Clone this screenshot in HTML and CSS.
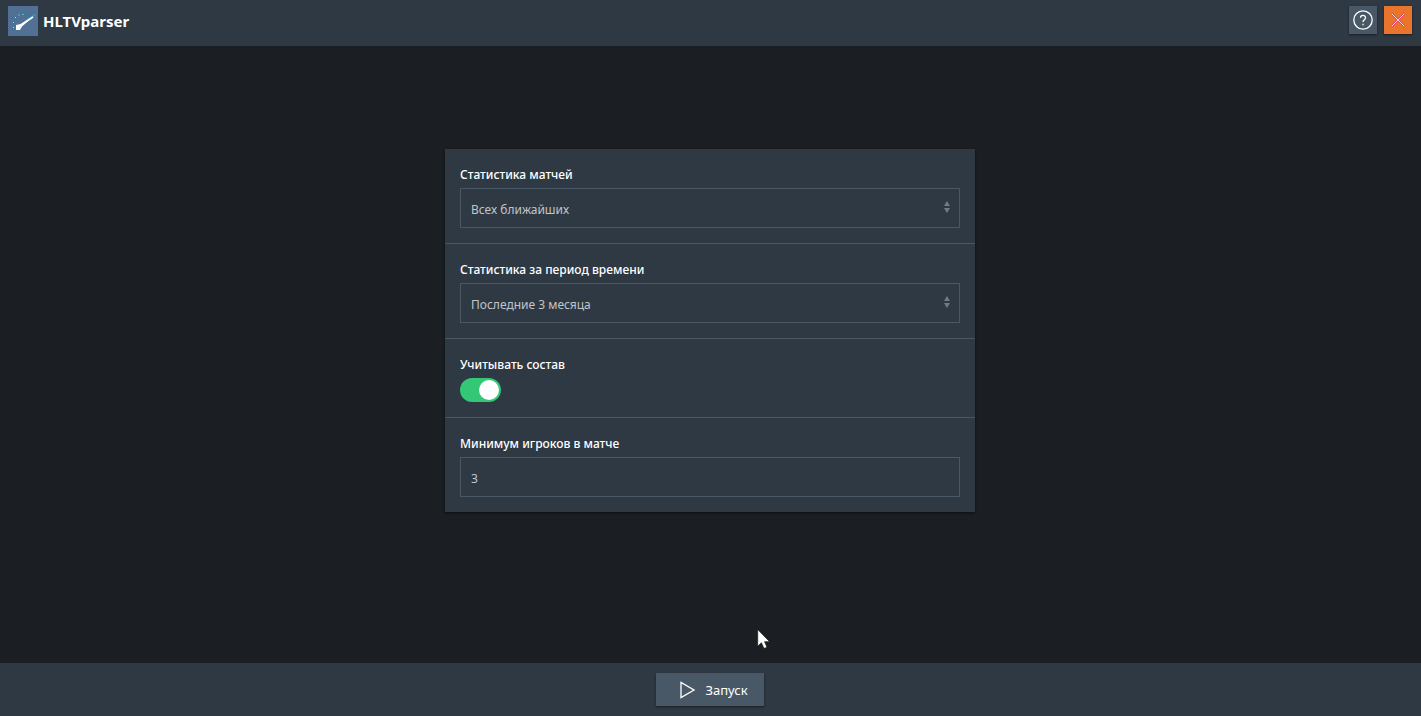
FILE: index.html
```html
<!DOCTYPE html>
<html lang="ru">
<head>
<meta charset="utf-8">
<title>HLTVparser</title>
<link rel="stylesheet" href="styles.css">
</head>
<body>
<header class="topbar">
  <svg class="logo" viewBox="0 0 30 30" aria-hidden="true">
    <rect width="30" height="30" fill="#526f94"/>
    <path d="M5 21.500h2M5 16.500h2M6.500 11.500h2M10.500 9h2M14.500 8.500h2M18.500 8.500h1.500M21.500 10.500h1.500" fill="none" stroke="#1d80a5" stroke-width="2"/>
    <path d="M5 21.500h1M5 16.500h1M7 11.500h1M10.500 9h1M14.500 8.500h1" fill="none" stroke="#a5e6ef" stroke-width="1"/>
    <path d="M8 19L13 18L27 9L14 20.500L12 24H8Z" fill="#fff"/>
    <path d="M19 14L27.500 8.500" fill="none" stroke="#2b98bd" stroke-width="2"/>
    <path d="M12 19.500L25 11" fill="none" stroke="#fff" stroke-width="1.500"/>
  </svg>
  <h1 class="title">HLTVparser</h1>
  <button class="button icon-button" type="button" aria-label="Справка">
    <svg class="icon" viewBox="0 0 20 20" aria-hidden="true"><circle cx="10" cy="10" r="9.200"/><path d="M7.500 7.800C7.500 4.500 12.500 4.500 12.500 7.700C12.500 9.800 10 9.500 10 12"/><path d="M10 13.700V15.200"/></svg>
  </button>
  <button class="button icon-button close" type="button" aria-label="Закрыть">
    <svg class="icon" viewBox="0 0 20 20" aria-hidden="true"><path class="cross-edge" d="M4 4L16 16M16 4L4 16"/><path class="cross" d="M4 4L16 16M16 4L4 16"/></svg>
  </button>
</header>
<main class="content">
  <form class="panel" id="settings">
    <div class="row">
      <label class="label" for="matches">Статистика матчей</label>
      <div class="select-wrap">
        <select class="field" id="matches"><option>Всех ближайших</option></select>
        <svg class="caret" viewBox="0 0 6 12" aria-hidden="true"><path d="M3 0L6 5H0ZM0 7H6L3 12Z"/></svg>
      </div>
    </div>
    <div class="row">
      <label class="label" for="period">Статистика за период времени</label>
      <div class="select-wrap">
        <select class="field" id="period"><option>Последние 3 месяца</option></select>
        <svg class="caret" viewBox="0 0 6 12" aria-hidden="true"><path d="M3 0L6 5H0ZM0 7H6L3 12Z"/></svg>
      </div>
    </div>
    <div class="row">
      <label class="label" for="lineup">Учитывать состав</label>
      <input class="switch" id="lineup" type="checkbox" checked>
    </div>
    <div class="row">
      <label class="label" for="players">Минимум игроков в матче</label>
      <input class="field" id="players" type="text" inputmode="numeric" value="3">
    </div>
  </form>
</main>
<footer class="bottombar">
  <button class="button run" type="submit" form="settings">
    <svg class="icon play" viewBox="0 0 20 20" aria-hidden="true"><path d="M4 2.500V17.500L17 10Z"/></svg>
    Запуск
  </button>
</footer>
<svg class="cursor" viewBox="0 0 12 19" aria-hidden="true"><path d="M.5 .5V16.500L4 13L6.500 18.500L9.300 17.300L7 12H11.800Z"/></svg>
</body>
</html>
```
FILE: styles.css
```css
* { box-sizing: border-box; }

body {
  display: flex;
  flex-direction: column;
  min-height: 100vh;
  margin: 0;
  background: #1b1e22;
  color: #fff;
  font: 13px/20px "Noto Sans", "Open Sans", sans-serif;
}

.topbar {
  display: flex;
  align-items: flex-start;
  gap: 7px;
  padding: 6px 9px 10px 8px;
  background: #2f3943;
}

.logo {
  width: 30px;
  height: 30px;
}

.title {
  flex: 1;
  margin: 0 0 0 -2px;
  font-size: 15px;
  font-weight: 700;
  line-height: 30px;
}

.button {
  display: flex;
  align-items: center;
  justify-content: center;
  border: 0;
  background: #495866;
  box-shadow: 0 1px 2px rgba(0, 0, 0, 0.5);
  color: #fff;
  font: inherit;
}

.icon-button {
  width: 28px;
  height: 28px;
  padding: 0;
}

.close { background: #e9752d; }

.icon {
  width: 20px;
  height: 20px;
  fill: none;
  stroke: #fff;
  stroke-width: 1.3;
}

.cross-edge {
  stroke: #e43b72;
  stroke-width: 2;
}

.cross {
  stroke: #ffd9e0;
  stroke-width: 1;
}

.content {
  display: flex;
  flex: 1;
  align-items: center;
  justify-content: center;
  padding: 0 1px 48px 0;
}

.panel {
  width: 100%;
  max-width: 530px;
  background: #2f3943;
  box-shadow: 0 1px 2px rgba(0, 0, 0, 0.5);
}

.row { padding: 15px; }

.row + .row { border-top: 1px solid #495866; }

.label {
  display: block;
  padding-top: 1px;
  margin-bottom: 3px;
  font-size: 12px;
  font-weight: 500;
}

.select-wrap { position: relative; }

.field {
  display: block;
  width: 100%;
  height: 40px;
  margin: 0;
  padding: 2px 10px 0;
  appearance: none;
  border: 1px solid #495866;
  border-radius: 0;
  background: #2f3943;
  color: #c1c5c9;
  font: inherit;
  font-size: 12px;
}

select.field { padding-top: 3px; }

.caret {
  position: absolute;
  top: 13px;
  right: 10px;
  width: 6px;
  height: 12px;
  fill: #777a7c;
  pointer-events: none;
}

.switch {
  display: flex;
  justify-content: flex-end;
  width: 41px;
  height: 24px;
  margin: 0;
  padding: 2px;
  appearance: none;
  border-radius: 12px;
  background: #34c775;
}

.switch::before {
  width: 20px;
  height: 20px;
  border-radius: 50%;
  background: #fff;
  content: "";
}

.switch:not(:checked) {
  justify-content: flex-start;
  background: #495866;
}

.bottombar {
  display: flex;
  justify-content: center;
  padding: 10px 1px 10px 0;
  background: #2f3943;
}

.run {
  gap: 8px;
  height: 33px;
  padding: 0 16px 0 21px;
}

.cursor {
  position: absolute;
  top: 629px;
  left: 757px;
  width: 13px;
  height: 20px;
  fill: #fff;
  stroke: #111;
  stroke-width: 0.6;
  pointer-events: none;
}
```
